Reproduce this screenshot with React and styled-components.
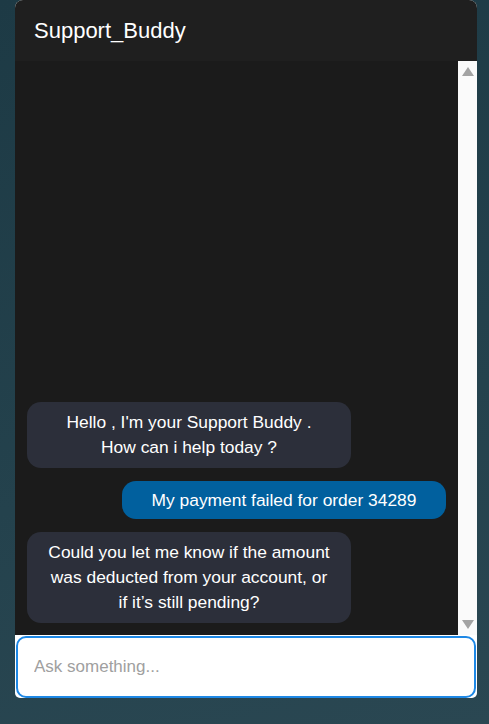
import styled, { createGlobalStyle } from "styled-components";

const GlobalStyle = createGlobalStyle`
  * { box-sizing: border-box; }
  html, body {
    margin: 0;
    padding: 0;
    height: 100%;
  }
  body {
    background: linear-gradient(165deg, #1d3a45 0%, #24424d 60%, #2a4752 100%);
    font-family: "Liberation Sans", Arial, sans-serif;
    overflow: hidden;
  }
`;

const Page = styled.div`
  padding-left: 15px;
`;

const Card = styled.div`
  width: 462px;
  height: 698px;
  display: flex;
  flex-direction: column;
  background: #ffffff;
  border-radius: 8px 8px 5px 5px;
  overflow: hidden;
`;

const Header = styled.div`
  height: 61px;
  flex-shrink: 0;
  display: flex;
  align-items: center;
  padding: 0 19px;
  background: #1f1f1f;
  color: #ffffff;
  font-size: 22px;
`;

const Body = styled.div`
  flex: 1;
  min-height: 0;
  display: flex;
`;

const Messages = styled.div`
  flex: 1;
  min-width: 0;
  overflow-y: auto;
  background: #1b1b1b;
  display: flex;
  flex-direction: column;
  padding: 0 12px 12px 12px;
  scrollbar-width: none;
`;

const ScrollTrack = styled.div`
  width: 19px;
  flex-shrink: 0;
  background: #fafafa;
  display: flex;
  flex-direction: column;
  justify-content: space-between;
  align-items: center;
  padding: 6px 0 6px 0;
`;

const List = styled.div`
  margin-top: auto;
  display: flex;
  flex-direction: column;
  gap: 13px;
`;

const Bubble = styled.div`
  width: 324px;
  align-self: ${(p) => (p.$user ? "flex-end" : "flex-start")};
  background: ${(p) => (p.$user ? "#01609e" : "#2c2f3a")};
  color: #ffffff;
  font-size: 17.4px;
  line-height: 25px;
  text-align: center;
  border-radius: 14px;
  padding: ${(p) => (p.$user ? "6.5px 10px" : "8px 10px")};
`;

const InputBar = styled.div`
  height: 63px;
  flex-shrink: 0;
  padding: 1px 1px 0 1px;
`;

const Input = styled.input`
  width: 100%;
  height: 62px;
  border: 2px solid #1e88e5;
  border-radius: 10px;
  outline: none;
  padding: 0 16px;
  font-family: "Liberation Sans", Arial, sans-serif;
  font-size: 17px;
  color: #222;
  caret-color: #000;
  background: #fff;
  &::placeholder {
    color: #a0a0a0;
  }
`;

const Arrow = ({ down }) => (
  <svg width="12" height="9" viewBox="0 0 12 9">
    <path d={down ? "M0 0 H12 L6 9 Z" : "M6 0 L12 9 H0 Z"} fill="#a3a3a3" />
  </svg>
);

const messages = [
  { user: false, text: ["Hello , I'm your Support Buddy .", "How can i help today ?"] },
  { user: true, text: ["My payment failed for order 34289"] },
  {
    user: false,
    text: ["Could you let me know if the amount", "was deducted from your account, or", "if it\u2019s still pending?"],
  },
];

export default function App() {
  return (
    <>
      <GlobalStyle />
      <Page>
        <Card>
          <Header>Support_Buddy</Header>
          <Body>
            <Messages>
              <List>
                {messages.map((m, i) => (
                  <Bubble key={i} $user={m.user}>
                    {m.text.map((line, j) => (
                      <div key={j}>{line}</div>
                    ))}
                  </Bubble>
                ))}
              </List>
            </Messages>
            <ScrollTrack>
              <Arrow />
              <Arrow down />
            </ScrollTrack>
          </Body>
          <InputBar>
            <Input placeholder="Ask something..." autoFocus />
          </InputBar>
        </Card>
      </Page>
    </>
  );
}
